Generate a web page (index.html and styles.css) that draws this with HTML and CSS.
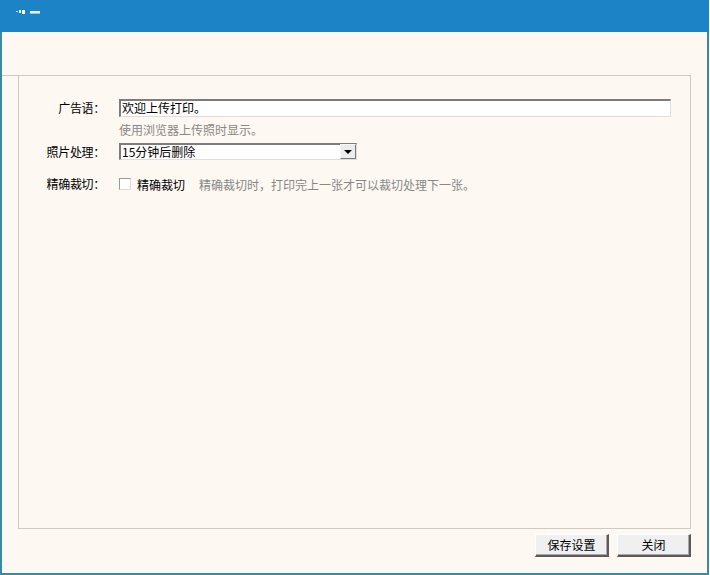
FILE: index.html
```html
<!DOCTYPE html>
<html lang="zh">
<head>
<meta charset="utf-8">
<title>设置</title>
<link rel="stylesheet" href="styles.css">
</head>
<body>
<div class="window">
  <div class="titlebar">
    <svg class="title-mark" width="30" height="6" viewBox="0 0 30 6">
      <rect x="0" y="2" width="2" height="1" fill="#bfe0f5"/>
      <rect x="3" y="1" width="2" height="3" fill="#ffffff"/>
      <rect x="6" y="1" width="3" height="4" fill="#ffffff"/>
      <rect x="14" y="2" width="10" height="2" fill="#e6f2fb"/>
      <rect x="14" y="4" width="10" height="1" fill="#8fc3e8"/>
    </svg>
  </div>
  <div class="toolbar"></div>
  <div class="content">
    <div class="panel">
      <div class="form">
        <div class="row">
          <label class="label">广告语：</label>
          <div class="field">
            <div class="textbox">欢迎上传打印。</div>
            <div class="hint">使用浏览器上传照时显示。</div>
          </div>
        </div>
        <div class="row row-select">
          <label class="label">照片处理：</label>
          <div class="field">
            <div class="select">
              <span class="select-value">15分钟后删除</span>
              <span class="select-btn"><span class="arrow"></span></span>
            </div>
          </div>
        </div>
        <div class="row row-check">
          <label class="label">精确裁切：</label>
          <div class="field check-field">
            <span class="checkbox"></span>
            <span class="check-text">精确裁切</span>
            <span class="hint-inline">精确裁切时，打印完上一张才可以裁切处理下一张。</span>
          </div>
        </div>
      </div>
    </div>
    <div class="buttons">
      <button class="btn">保存设置</button>
      <button class="btn">关闭</button>
    </div>
  </div>
</div>
</body>
</html>
```

FILE: styles.css
```css
* { box-sizing: border-box; }
html, body {
  margin: 0;
  padding: 0;
  background: #ffffff;
}
body {
  width: 710px;
  height: 575px;
  font-family: "Noto Sans CJK SC", "Liberation Sans", sans-serif;
  font-size: 12px;
  color: #000;
}
.window {
  width: 709px;
  height: 575px;
  background: #fdf8f2;
  border-left: 2px solid #3c8a9d;
  border-right: 2px solid #3c8a9d;
  border-bottom: 2px solid #3c8a9d;
  display: flex;
  flex-direction: column;
}
.titlebar {
  height: 32px;
  background: #1d83c7;
  margin: 0 -2px;
  padding: 9px 0 0 16px;
  flex: none;
}
.title-mark { display: block; }
.toolbar {
  height: 44px;
  flex: none;
  border-bottom: 1px solid #cdc9c4;
  margin-right: 16px;
}
.content {
  flex: 1;
  display: flex;
  flex-direction: column;
  padding: 0 16px 0 16px;
}
.panel {
  height: 453px;
  border: 1px solid #cdc9c4;
  border-top: none;
  padding-top: 23px;
}
.form {
  display: flex;
  flex-direction: column;
}
.row {
  display: flex;
  align-items: flex-start;
}
.label {
  width: 86px;
  text-align: right;
  line-height: 18px;
  margin-right: 14px;
  flex: none;
  color: #000;
  letter-spacing: -0.3px;
}
.field { flex: none; }
.textbox {
  width: 552px;
  height: 18px;
  background: #fff;
  border-style: solid;
  border-width: 2px 1px 1px 2px;
  border-color: #7c7c7c #dedede #dedede #7c7c7c;
  line-height: 14px;
  padding-left: 1px;
}
.hint {
  color: #888;
  margin-top: 5px;
  line-height: 16px;
}
.row-select { margin-top: 5px; }
.select {
  width: 238px;
  height: 17px;
  background: #fff;
  border-style: solid;
  border-width: 2px 1px 1px 2px;
  border-color: #7c7c7c #dedede #dedede #7c7c7c;
  display: flex;
  align-items: center;
  justify-content: space-between;
}
.select-value {
  padding-left: 1px;
  line-height: 14px;
}
.select-btn {
  width: 16px;
  height: 15px;
  margin-top: -1px;
  background: #ececec;
  border-style: solid;
  border-width: 1px;
  border-color: #f8f8f8 #7a7a7a #7a7a7a #f8f8f8;
  display: flex;
  align-items: center;
  justify-content: center;
}
.arrow {
  width: 0;
  height: 0;
  border-left: 4px solid transparent;
  border-right: 4px solid transparent;
  border-top: 4px solid #000;
}
.row-check { margin-top: 14px; }
.check-field {
  display: flex;
  align-items: center;
  height: 18px;
}
.checkbox {
  width: 12px;
  height: 12px;
  background: #fff;
  border: 1px solid #9a9a9a;
  border-right-color: #dcdcdc;
  border-bottom-color: #dcdcdc;
  margin-right: 6px;
}
.check-text { margin-right: 14px; }
.hint-inline { color: #888; }
.buttons {
  display: flex;
  justify-content: flex-end;
  gap: 8px;
  padding-top: 5px;
}
.btn {
  width: 74px;
  height: 23px;
  font-family: "Noto Sans CJK SC", "Liberation Sans", sans-serif;
  font-size: 12px;
  color: #000;
  background: #f0f0f0;
  border-style: solid;
  border-width: 1px 2px 2px 1px;
  border-color: #ffffff #5a5a5a #5a5a5a #ffffff;
  box-shadow: inset -1px -1px 0 #a8a8a8;
  padding: 0;
  line-height: 18px;
}
```
